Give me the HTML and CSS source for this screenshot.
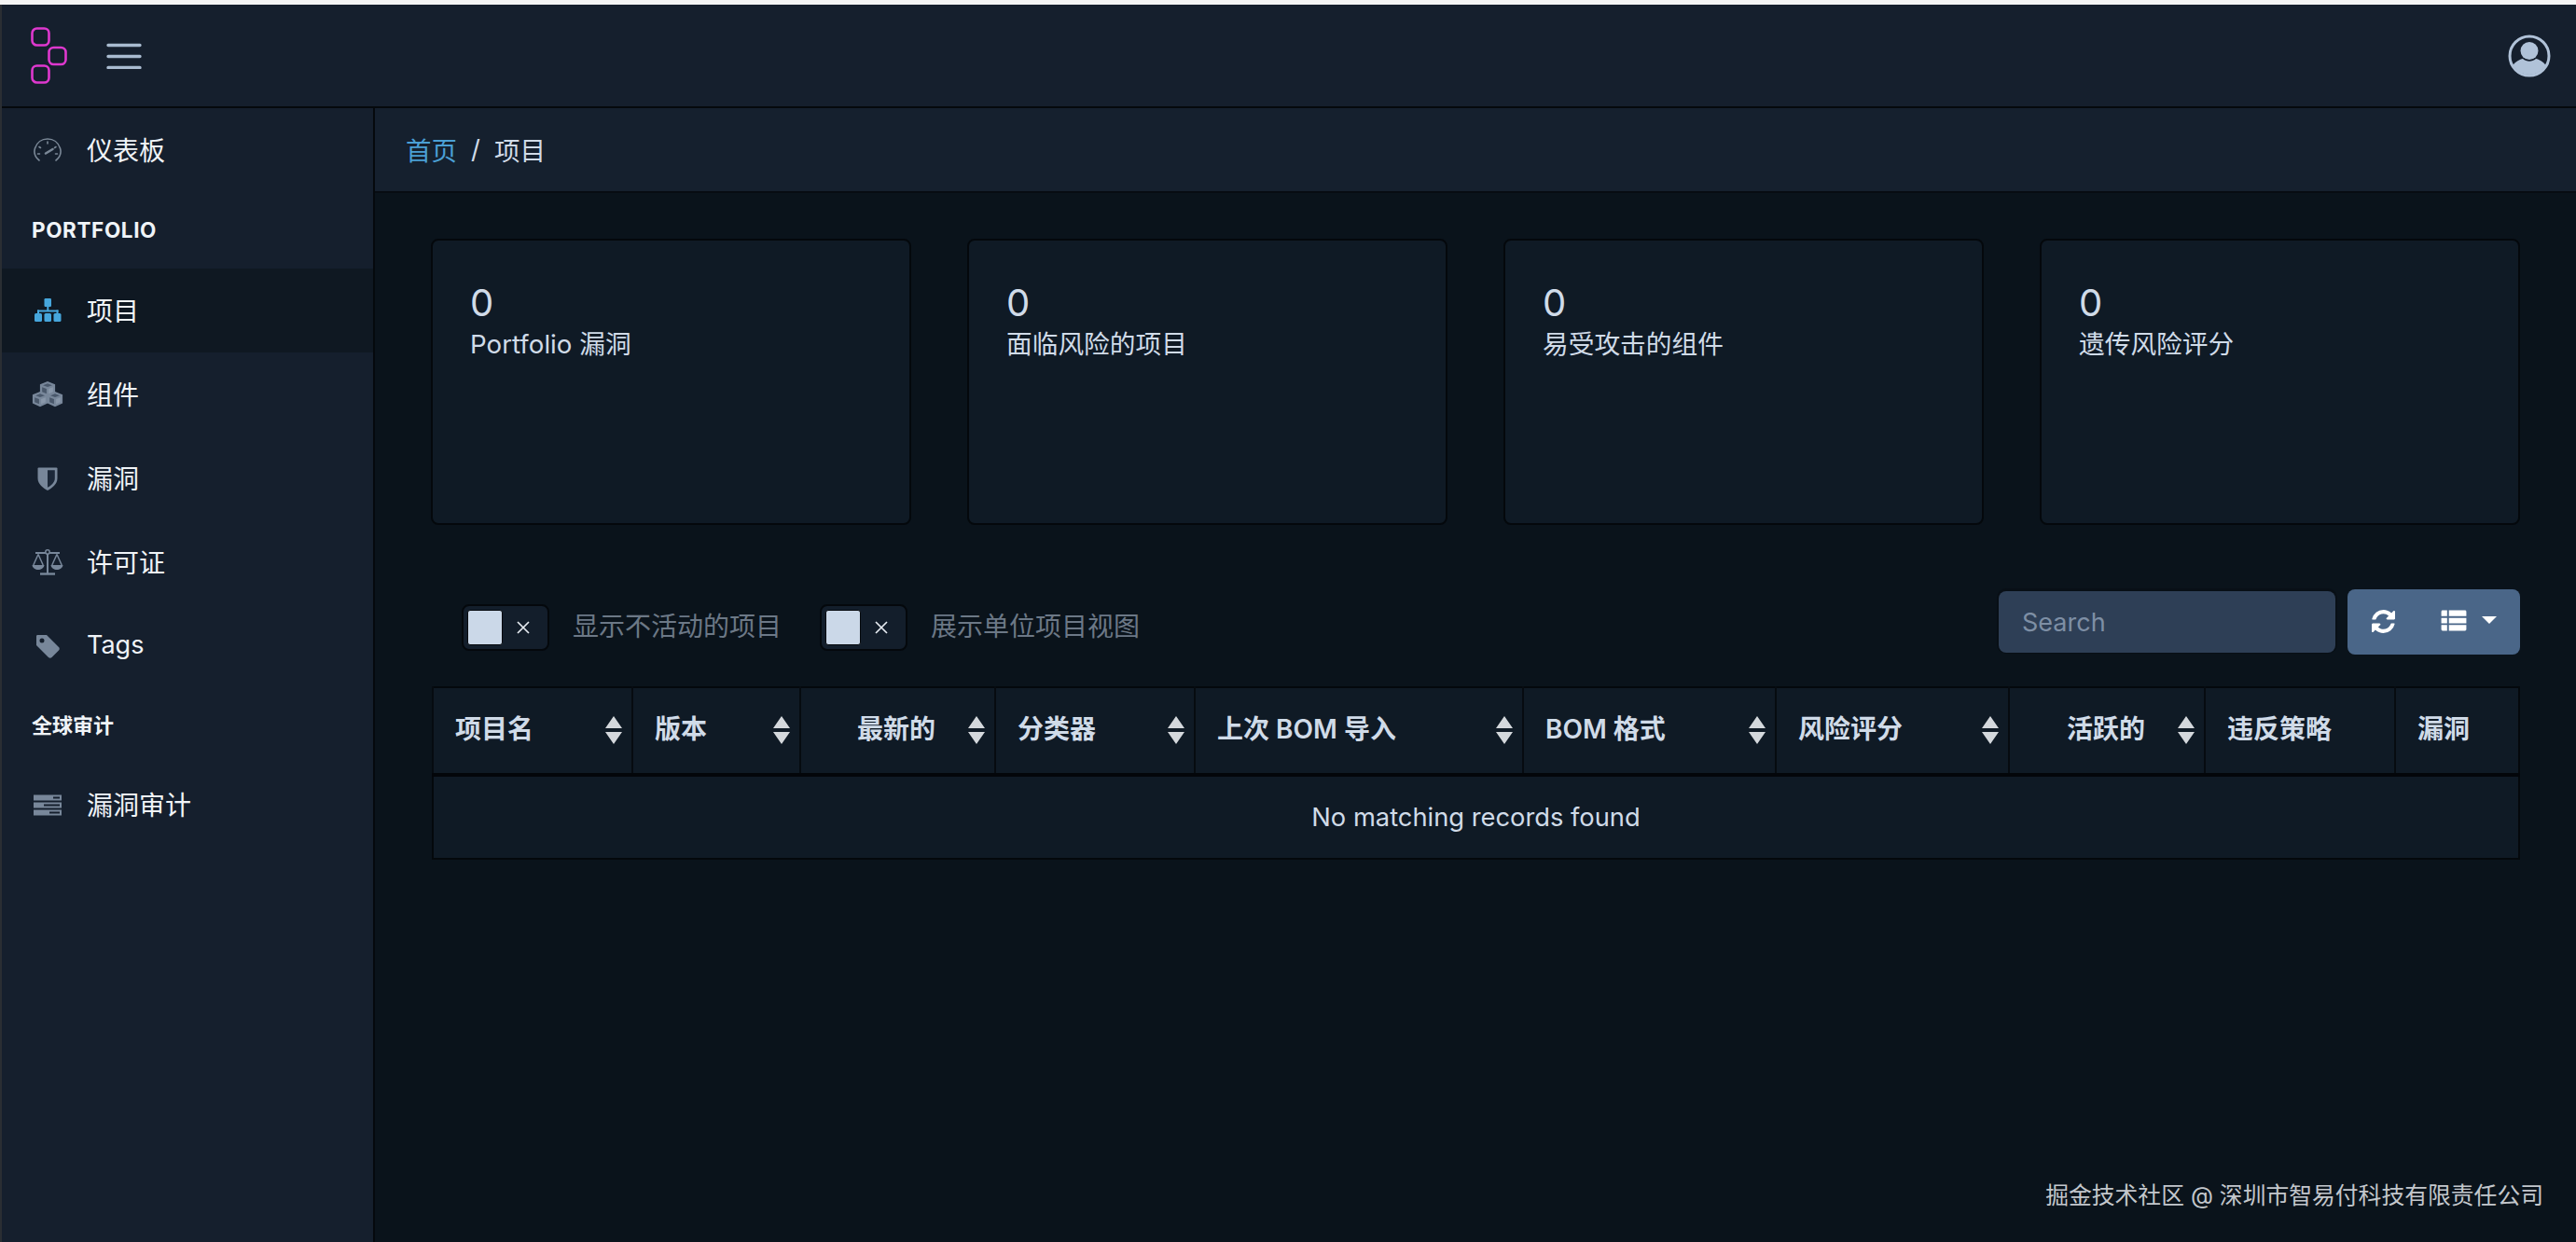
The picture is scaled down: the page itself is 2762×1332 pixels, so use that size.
FILE: index.html
```html
<!DOCTYPE html>
<html lang="zh-CN">
<head>
<meta charset="utf-8">
<title>项目</title>
<link rel="stylesheet" href="styles.css">
</head>
<body>
<svg class="defs" width="0" height="0" aria-hidden="true">
  <symbol id="sort" viewBox="0 0 18 30">
    <path d="M9 0 L18 13 H0 Z M0 17 H18 L9 30 Z"/>
  </symbol>
  <symbol id="cube" viewBox="0 0 20 20">
    <path d="M10 0 L19 3.5 V14 L10 18 L1 14 V3.5 Z" fill="#78879a"/>
    <path d="M10 2.5 L15.5 4.6 L10 6.8 L4.5 4.6 Z M3.5 7 L8.8 9 V14.6 L3.5 12.4 Z" fill="#4a586b"/>
    <path d="M11.2 9 L16.5 7 V12.4 L11.2 14.6 Z" fill="#8a98aa"/>
  </symbol>
  <symbol id="xmark" viewBox="0 0 14 14">
    <path d="M1 1 L13 13 M13 1 L1 13" fill="none" stroke="#e6ebf1" stroke-width="1.7"/>
  </symbol>
</svg>
<div class="strip"></div>
<div class="app">
  <header class="topbar">
    <svg class="logo" viewBox="0 0 40 62" width="40" height="62" fill="none" stroke="#de38ce" stroke-width="2.6">
      <rect x="1.5" y="1.5" width="18" height="18" rx="5"/>
      <rect x="19.5" y="22" width="18" height="18" rx="5"/>
      <rect x="1.5" y="41.5" width="18" height="18" rx="5"/>
    </svg>
    <svg class="burger" viewBox="0 0 38 28" width="38" height="28" fill="none" stroke="#a9bbd0" stroke-width="3.4" stroke-linecap="round">
      <path d="M2 2.5H36M2 14.5H36M2 26.5H36"/>
    </svg>
    <svg class="avatar" viewBox="0 0 46 46" width="46" height="46">
      <circle cx="23" cy="23" r="21" fill="#151f2d" stroke="#b0c2d8" stroke-width="3"/>
      <circle cx="23" cy="17.5" r="9.5" fill="#b0c2d8"/>
      <path d="M5.500 33 C8 29 13 26.500 16 26 C20 29.500 26 29.500 30 26 C33 26.500 38 29 40.500 33 C36.500 39.500 29.500 43 23 43 C16.500 43 9.500 39.500 5.500 33 Z" fill="#b0c2d8"/>
    </svg>
  </header>
  <div class="body">
    <nav class="sidebar">
      <a class="item">
        <span class="ico"><svg viewBox="0 0 30 28" width="30" height="28" fill="none" stroke="#7a8796" stroke-width="1.6" stroke-linecap="round">
          <path d="M6 25 C1.500 21.500 0 17 1.500 12 C3.500 5.500 9 2 15 2 C21 2 26.500 5.500 28.500 12 C30 17 28.500 21.500 24 25"/>
          <path d="M4.500 18H6.500M6 10.500L7.500 11.500M15 5V7M24 10.500L22.500 11.500M25.500 18H23.500"/>
          <path d="M13 17.500L20.500 13" stroke-width="2.600"/>
        </svg></span>
        <span>仪表板</span>
      </a>
      <div class="title title-en">PORTFOLIO</div>
      <a class="item active">
        <span class="ico"><svg viewBox="0 0 30 26" width="30" height="26" fill="#46a6dc">
          <rect x="11.500" y="0" width="7.500" height="9" rx="1.200"/>
          <rect x="14.300" y="8" width="2" height="6"/>
          <rect x="4" y="12.500" width="22.500" height="2"/>
          <rect x="4" y="12.500" width="2" height="5"/>
          <rect x="24.500" y="12.500" width="2" height="5"/>
          <rect x="1" y="16" width="8" height="9" rx="1.500"/>
          <rect x="11.500" y="16" width="7.500" height="9" rx="1.500"/>
          <rect x="21.500" y="16" width="8" height="9" rx="1.500"/>
        </svg></span>
        <span>项目</span>
      </a>
      <a class="item">
        <span class="ico"><svg viewBox="0 0 34 29" width="34" height="29">
          <use href="#cube" x="8" y="0" width="18" height="18"/>
          <use href="#cube" x="0" y="11" width="18" height="18"/>
          <use href="#cube" x="16" y="11" width="18" height="18"/>
        </svg></span>
        <span>组件</span>
      </a>
      <a class="item">
        <span class="ico"><svg viewBox="0 0 22 25" width="22" height="25">
          <path d="M1.500 0.500 H20.500 Q21.500 0.500 21.500 1.500 V12 C21.500 18 16 22.500 11 25 C6 22.500 0.500 18 0.500 12 V1.500 Q0.500 0.500 1.500 0.500 Z" fill="#78879a"/>
          <path d="M11 3.200 H18.800 V12 C18.800 16.500 14.500 20 11 21.800 Z" fill="#1c2839"/>
        </svg></span>
        <span>漏洞</span>
      </a>
      <a class="item">
        <span class="ico"><svg viewBox="0 0 34 28" width="34" height="28" fill="none" stroke="#78879a" stroke-width="1.500">
          <circle cx="17" cy="3" r="2.200"/>
          <path d="M4 4H14.800M19.200 4H30M17 5V26" stroke-width="2"/>
          <path d="M9 26.500H25" stroke-width="2.400"/>
          <path d="M7 5.500L1.800 17M7 5.500L12.200 17M27 5.500L21.800 17M27 5.500L32.200 17"/>
          <path d="M0.500 17H13.500C13 20.500 10 22 7 22C4 22 1 20.500 0.500 17ZM20.500 17H33.500C33 20.500 30 22 27 22C24 22 21 20.500 20.500 17Z" fill="#78879a" stroke="none"/>
        </svg></span>
        <span>许可证</span>
      </a>
      <a class="item">
        <span class="ico"><svg viewBox="0 0 25 25" width="25" height="25">
          <path d="M1.500 0 H11 L24 13 C25 14 25 15.500 24 16.500 L16.500 24 C15.500 25 14 25 13 24 L0 11 V1.500 C0 0.500 0.500 0 1.500 0 Z M6 3.500 A2.500 2.500 0 1 0 6 8.500 A2.500 2.500 0 1 0 6 3.500 Z" fill="#78879a" fill-rule="evenodd"/>
        </svg></span>
        <span class="latin">Tags</span>
      </a>
      <div class="title title-cn">全球审计</div>
      <a class="item">
        <span class="ico"><svg viewBox="0 0 30 23" width="30" height="23">
          <path d="M0 0.500H30V6.500H0ZM0 8.500H30V14.500H0ZM0 16.500H30V22.500H0Z" fill="#78879a"/>
          <path d="M21 2.500H28V4.500H21ZM11 10.500H28V12.500H11ZM17 18.500H28V20.500H17Z" fill="#151f2d"/>
        </svg></span>
        <span>漏洞审计</span>
      </a>
    </nav>
    <div class="main">
      <div class="crumbs">
        <a class="crumb-link">首页</a>
        <span class="crumb-sep">/</span>
        <span>项目</span>
      </div>
      <div class="content">
        <section class="cards">
          <div class="card"><div class="num">0</div><div class="lbl">Portfolio 漏洞</div></div>
          <div class="card"><div class="num">0</div><div class="lbl">面临风险的项目</div></div>
          <div class="card"><div class="num">0</div><div class="lbl">易受攻击的组件</div></div>
          <div class="card"><div class="num">0</div><div class="lbl">遗传风险评分</div></div>
        </section>
        <section class="toolbar">
          <div class="toggles">
            <span class="toggle"><span class="knob"></span><svg class="x"><use href="#xmark"/></svg></span>
            <span class="tlabel">显示不活动的项目</span>
            <span class="toggle toggle-b"><span class="knob"></span><svg class="x"><use href="#xmark"/></svg></span>
            <span class="tlabel">展示单位项目视图</span>
          </div>
          <input class="search" type="text" placeholder="Search">
          <div class="btns">
            <svg class="refresh" viewBox="128 128 1536 1536" width="25" height="25" fill="#fff">
              <path d="M1639 1056q0 5-1 7-64 268-268 434.500t-478 166.500q-146 0-282.500-55t-243.500-157l-129 129q-19 19-45 19t-45-19-19-45v-448q0-26 19-45t45-19h448q26 0 45 19t19 45-19 45l-137 137q71 66 161 102t187 36q134 0 250-65t186-179q11-17 53-117 8-23 30-23h192q13 0 22.500 9.500t9.500 22.500zm25-800v448q0 26-19 45t-45 19h-448q-26 0-45-19t-19-45 19-45l138-138q-148-137-349-137-134 0-250 65t-186 179q-11 17-53 117-8 23-30 23h-199q-13 0-22.500-9.500t-9.500-22.500v-7q65-268 270-434.500t480-166.500q146 0 284 55.500t245 156.500l130-129q19-19 45-19t45 19 19 45z"/>
            </svg>
            <svg class="list" viewBox="0 0 28 24" width="28" height="23" fill="#fff">
              <path d="M0 2 Q0 0.500 1.500 0.500 H6.500 V7 H0 Z M8.500 0.500 H26.500 Q28 0.500 28 2 V7 H8.500 Z M0 9 H6.500 V15 H0 Z M8.500 9 H28 V15 H8.500 Z M0 17 H6.500 V23.500 H1.500 Q0 23.500 0 22 Z M8.500 17 H28 V22 Q28 23.500 26.500 23.500 H8.500 Z"/>
            </svg>
            <span class="caret"></span>
          </div>
        </section>
        <table class="grid">
          <colgroup>
            <col class="c1"><col class="c2"><col class="c3"><col class="c4"><col class="c5">
            <col class="c6"><col class="c7"><col class="c8"><col class="c9"><col class="c10">
          </colgroup>
          <thead>
            <tr>
              <th>项目名<svg class="sort"><use href="#sort"/></svg></th>
              <th>版本<svg class="sort"><use href="#sort"/></svg></th>
              <th class="right">最新的<svg class="sort"><use href="#sort"/></svg></th>
              <th>分类器<svg class="sort"><use href="#sort"/></svg></th>
              <th>上次 BOM 导入<svg class="sort"><use href="#sort"/></svg></th>
              <th>BOM 格式<svg class="sort"><use href="#sort"/></svg></th>
              <th>风险评分<svg class="sort"><use href="#sort"/></svg></th>
              <th class="right">活跃的<svg class="sort"><use href="#sort"/></svg></th>
              <th>违反策略</th>
              <th>漏洞</th>
            </tr>
          </thead>
          <tbody>
            <tr><td colspan="10">No matching records found</td></tr>
          </tbody>
        </table>
      </div>
    </div>
  </div>
  <div class="watermark">掘金技术社区 @ 深圳市智易付科技有限责任公司</div>
</div>
</body>
</html>
```
FILE: styles.css
```css
* { box-sizing: border-box; }
html, body { margin: 0; height: 100%; overflow: hidden; }
body {
  background: #0a131b;
  color: #d0dbe8;
  font-family: Inter, "Noto Sans CJK SC", sans-serif;
  font-size: 28px;
}
.defs { position: absolute; }
.strip { height: 5px; background: #f4f4f4; }
.app {
  position: relative;
  height: 1327px;
  display: flex;
  flex-direction: column;
  border-left: 2px solid #2a2e33;
}
.topbar {
  height: 111px;
  flex: none;
  display: flex;
  align-items: center;
  background: #151f2d;
  border-bottom: 2px solid #05090d;
  padding: 0 27px 0 31px;
}
.burger { margin-left: 41px; }
.avatar { margin-left: auto; }
.body { flex: 1; display: flex; min-height: 0; }
.sidebar {
  width: 398px;
  flex: none;
  background: #151f2d;
  color: #f0f4f8;
}
.item {
  height: 90px;
  display: flex;
  align-items: center;
  padding: 0 0 3px 91px;
  position: relative;
  font-size: 28px;
}
.item.active { background: #0f1822; }
.ico {
  position: absolute;
  left: 32px;
  top: 0;
  bottom: 0;
  width: 34px;
  display: flex;
  align-items: center;
  justify-content: center;
}
.latin { font-size: 27px; }
.title { display: flex; align-items: center; padding-left: 32px; font-weight: 700; }
.title-en { height: 82px; padding-bottom: 1px; font-size: 22.5px; letter-spacing: 0.6px; }
.title-cn { height: 80px; padding-bottom: 5px; font-size: 22px; font-weight: 600; }
.main {
  flex: 1;
  min-width: 0;
  display: flex;
  flex-direction: column;
  border-left: 2px solid #05090d;
}
.crumbs {
  height: 91px;
  flex: none;
  display: flex;
  align-items: center;
  padding: 0 0 2px 33px;
  background: #15202e;
  border-bottom: 2px solid #070c12;
  font-size: 27.5px;
}
.crumb-link { color: #4a9fd4; }
.crumb-sep { margin: 0 15px; }
.content { padding: 49px 61px 0; flex: 1; }
.cards {
  display: grid;
  grid-template-columns: repeat(4, 1fr);
  gap: 60px;
  margin: 0 -1px;
}
.card {
  height: 307px;
  padding: 43px 40px;
  background: #0f1a25;
  border: 2px solid #04080c;
  border-radius: 8px;
}
.num { font-size: 40px; line-height: 48px; }
.lbl { font-size: 27.7px; line-height: 40px; }
.toolbar {
  display: flex;
  align-items: flex-start;
  margin: 69px -1px 34px 0;
  height: 70px;
}
.toggles { display: flex; align-items: center; margin: 13px auto 0 32px; height: 49px; }
.toggle {
  width: 94px;
  height: 50px;
  flex: none;
  display: flex;
  align-items: center;
  padding-left: 4px;
  background: #131e2b;
  border: 2px solid #04080c;
  border-radius: 8px;
  margin-top: 7px;
}
.toggle-b { margin-left: 41px; }
.knob {
  width: 38px;
  height: 38px;
  background: #cbd8e8;
  border: 1px solid #05090d;
  border-radius: 3px;
}
.x { width: 14px; height: 14px; margin-left: 15px; }
.tlabel { font-size: 28px; color: #6c7886; margin-left: 25px; }
.search {
  width: 361px;
  height: 66px;
  margin-top: 2px;
  padding: 0 25px;
  background: #2e3f56;
  border: none;
  border-radius: 8px;
  box-shadow: 0 -1px 0 2px #05090d55;
  color: #d6e0ec;
  font: 27px Inter, sans-serif;
  outline: none;
}
.search::placeholder { color: #7e8fa5; opacity: 1; }
.btns {
  width: 185px;
  height: 70px;
  margin-left: 13px;
  display: flex;
  align-items: center;
  padding: 0 0 0 26px;
  background: #4a6688;
  border-radius: 8px;
}
.refresh { margin-top: -2px; }
.list { margin: -4px 0 0 49px; }
.caret {
  width: 0;
  height: 0;
  margin: -4px 0 0 16px;
  border-left: 8px solid transparent;
  border-right: 8px solid transparent;
  border-top: 8px solid #fff;
}
.grid {
  width: calc(100% - 1px);
  table-layout: fixed;
  border-collapse: collapse;
  background: #0f1a25;
  border: 2px solid #04080c;
}
.c1 { width: 214px; } .c2 { width: 180px; } .c3 { width: 209px; } .c4 { width: 214px; } .c5 { width: 352px; }
.c6 { width: 271px; } .c7 { width: 250px; } .c8 { width: 210px; } .c9 { width: 204px; } .c10 { width: 133px; }
th {
  position: relative;
  height: 94px;
  padding: 0 0 7px 23px;
  text-align: left;
  font-size: 28px;
  font-weight: 600;
  color: #d0dbe8;
  border-left: 2px solid #060b10;
  border-bottom: 4px solid #03060a;
  white-space: nowrap;
}
th.right { text-align: right; padding-right: 63px; }
.sort {
  position: absolute;
  right: 10px;
  top: 30px;
  width: 18px;
  height: 30px;
  fill: #d4d8dc;
  filter: blur(0.6px);
}
td {
  height: 90px;
  text-align: center;
  font-size: 27.3px;
  color: #d0dbe8;
}
.watermark {
  position: absolute;
  right: 35px;
  bottom: 34px;
  font-size: 24.8px;
  color: #c3c7cc;
}
```
